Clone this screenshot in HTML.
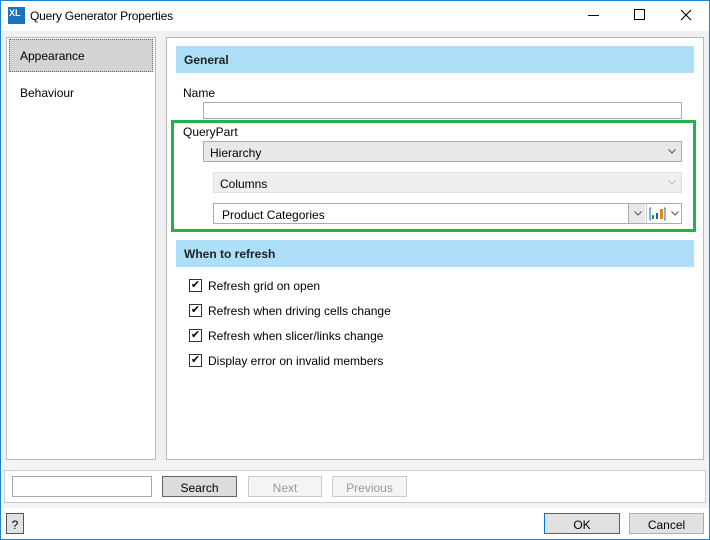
<!DOCTYPE html>
<html><head><style>
*{margin:0;padding:0;box-sizing:border-box}
body{width:710px;height:540px;position:relative;overflow:hidden;font-family:"Liberation Sans",sans-serif;font-size:12px;color:#000;background:#f0f0f0}
.a{position:absolute}
.frame{left:0;top:0;width:710px;height:540px;border:1px solid #1883d7;pointer-events:none}
.title{left:0;top:0;width:710px;height:31px;background:#fff}
.panel{background:#fff;border:1px solid #b9b9b9}
.hdr{background:#addff9;font-weight:bold;font-size:12px;padding:7px 0 0 8px;color:#222}
.combo{border:1px solid #acacac;background:#e8e8e8;padding:4px 0 0 6px}
.chev{position:absolute;right:5px;top:7px}
.btn{border:1px solid #adadad;background:#e1e1e1;text-align:center;padding-top:4px}
.cb{width:13px;height:13px;border:1px solid #333;background:#fff;font-size:11px;line-height:11px;text-align:center}
</style></head><body>
<div class="a title"></div>
<div class="a" style="left:8px;top:7px;width:17px;height:17px;background:#1a72bf;color:#fff;font-size:9px;font-weight:bold;padding:1px 0 0 1px">XL</div>
<div class="a" style="left:30px;top:9px;font-size:12px;letter-spacing:-0.2px">Query Generator Properties</div>
<div class="a" style="left:588px;top:15px;width:11px;height:1px;background:#000"></div>
<div class="a" style="left:634px;top:9px;width:11px;height:11px;border:1px solid #000"></div>
<svg class="a" style="left:680px;top:9px" width="12" height="12"><path d="M1 1L11 11M11 1L1 11" stroke="#000" stroke-width="1.1"/></svg>

<div class="a panel" style="left:6px;top:37px;width:150px;height:423px"></div>
<div class="a" style="left:9px;top:39px;width:144px;height:33px;background:#d4d4d4;border:1px dotted #666"></div>
<div class="a" style="left:20px;top:49px">Appearance</div>
<div class="a" style="left:20px;top:86px">Behaviour</div>

<div class="a panel" style="left:166px;top:37px;width:538px;height:423px"></div>
<div class="a hdr" style="left:176px;top:46px;width:518px;height:27px">General</div>
<div class="a" style="left:183px;top:86px">Name</div>
<div class="a" style="left:203px;top:102px;width:479px;height:17px;border:1px solid #aaa;background:#fff"></div>
<div class="a" style="left:171px;top:120px;width:525px;height:112px;border:3px solid #22b14c"></div>
<div class="a" style="left:183px;top:125px">QueryPart</div>
<div class="a combo" style="left:203px;top:141px;width:479px;height:21px">Hierarchy<svg class="chev" width="8" height="5"><path d="M0.5 0.5L4 4L7.5 0.5" stroke="#555" fill="none"/></svg></div>
<div class="a combo" style="left:213px;top:172px;width:469px;height:21px;background:#efefef;border-color:#e0e0e0">Columns<svg class="chev" width="8" height="5"><path d="M0.5 0.5L4 4L7.5 0.5" stroke="#bbb" fill="none"/></svg></div>
<div class="a" style="left:213px;top:203px;width:469px;height:21px;border:1px solid #acacac;background:#fff;padding:4px 0 0 8px">Product Categories</div>
<div class="a" style="left:628px;top:204px;width:17px;height:19px;background:#e8e8e8;border-left:1px solid #acacac"><svg style="position:absolute;left:5px;top:7px" width="8" height="5"><path d="M0.5 0.5L4 4L7.5 0.5" stroke="#555" fill="none"/></svg></div>
<div class="a" style="left:646px;top:204px;width:35px;height:19px;background:#fff;border-left:1px solid #ccc">
<svg width="35" height="19"><path d="M3 4v12M3 4h1M3 16h1M18 4v12M18 4h-1M18 16h-1" stroke="#1a5fb4"/><rect x="5" y="11" width="2" height="4" fill="#2a9a2a"/><rect x="9" y="9" width="2" height="6" fill="#1a5fb4"/><rect x="13" y="5" width="3" height="10" fill="#e08a00"/><path d="M24.5 7.5L28 11L31.5 7.5" stroke="#555" fill="none"/></svg></div>

<div class="a hdr" style="left:176px;top:240px;width:518px;height:27px">When to refresh</div>
<div class="a cb" style="left:189px;top:279px">✔</div><div class="a" style="left:208px;top:279px">Refresh grid on open</div>
<div class="a cb" style="left:189px;top:304px">✔</div><div class="a" style="left:208px;top:304px">Refresh when driving cells change</div>
<div class="a cb" style="left:189px;top:329px">✔</div><div class="a" style="left:208px;top:329px">Refresh when slicer/links change</div>
<div class="a cb" style="left:189px;top:354px">✔</div><div class="a" style="left:208px;top:354px">Display error on invalid members</div>

<div class="a" style="left:0;top:460px;width:710px;height:50px;background:#f3f3f3"></div>
<div class="a panel" style="left:4px;top:470px;width:702px;height:33px;border-color:#ccc"></div>
<div class="a" style="left:12px;top:476px;width:140px;height:21px;border:1px solid #aaa;background:#fff"></div>
<div class="a btn" style="left:162px;top:476px;width:75px;height:21px;border-color:#666;background:#dcdcdc">Search</div>
<div class="a btn" style="left:248px;top:476px;width:74px;height:21px;background:#f4f4f4;border-color:#ccc;color:#999">Next</div>
<div class="a btn" style="left:332px;top:476px;width:75px;height:21px;background:#f4f4f4;border-color:#ccc;color:#999">Previous</div>
<div class="a" style="left:0;top:508px;width:710px;height:32px;background:#fff"></div>
<div class="a btn" style="left:6px;top:513px;width:18px;height:21px;border-color:#555">?</div>
<div class="a btn" style="left:544px;top:513px;width:76px;height:21px;border-color:#0078d7">OK</div>
<div class="a btn" style="left:629px;top:513px;width:75px;height:21px">Cancel</div>
<div class="a frame"></div>
</body></html>
